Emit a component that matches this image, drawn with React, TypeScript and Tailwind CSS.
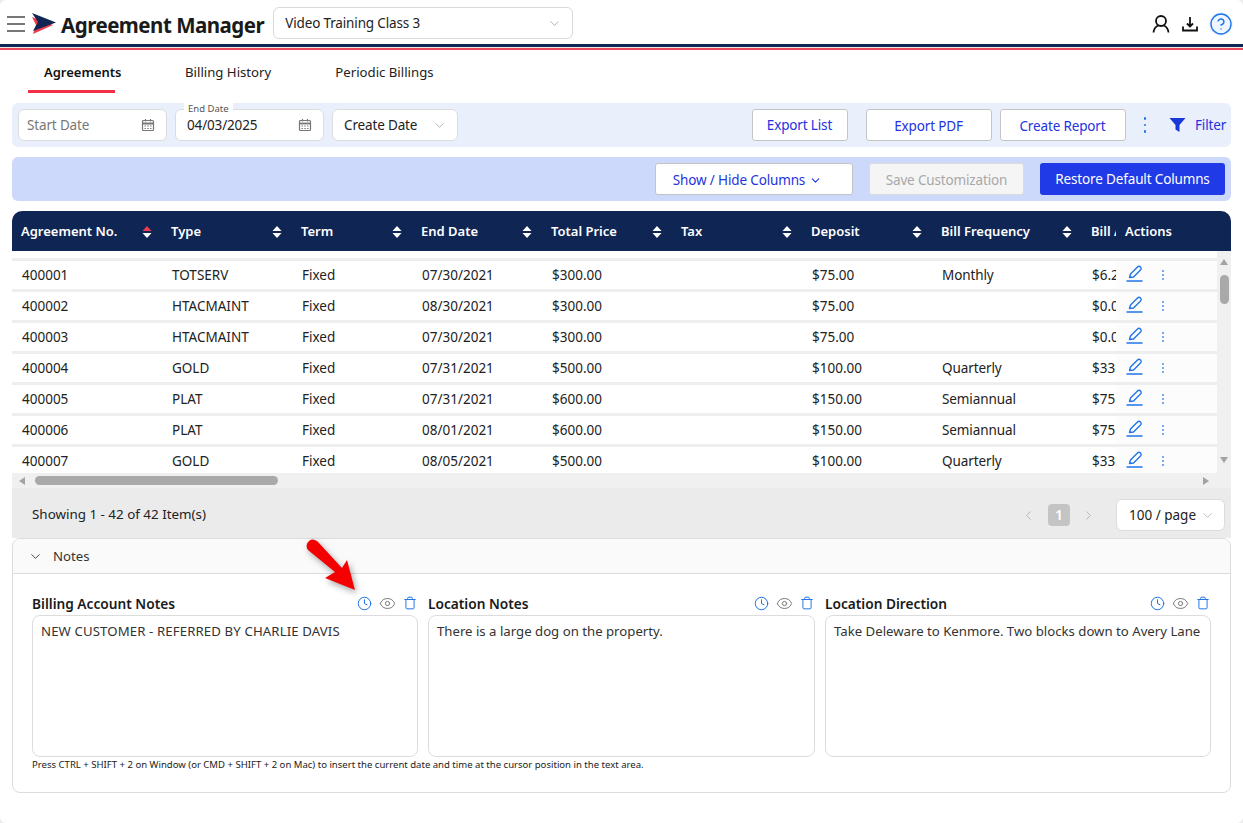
import { ChevronDown, ChevronLeft, ChevronRight, CircleHelp, Clock, Eye, Trash } from 'lucide-react'

type Row = {
  no: string
  type: string
  end: string
  total: string
  deposit: string
  freq: string
  bill: string
}

const rows: Row[] = [
  { no: '400001', type: 'TOTSERV', end: '07/30/2021', total: '$300.00', deposit: '$75.00', freq: 'Monthly', bill: '$6.25' },
  { no: '400002', type: 'HTACMAINT', end: '08/30/2021', total: '$300.00', deposit: '$75.00', freq: '', bill: '$0.00' },
  { no: '400003', type: 'HTACMAINT', end: '07/30/2021', total: '$300.00', deposit: '$75.00', freq: '', bill: '$0.00' },
  { no: '400004', type: 'GOLD', end: '07/31/2021', total: '$500.00', deposit: '$100.00', freq: 'Quarterly', bill: '$33.33' },
  { no: '400005', type: 'PLAT', end: '07/31/2021', total: '$600.00', deposit: '$150.00', freq: 'Semiannual', bill: '$75.00' },
  { no: '400006', type: 'PLAT', end: '08/01/2021', total: '$600.00', deposit: '$150.00', freq: 'Semiannual', bill: '$75.00' },
  { no: '400007', type: 'GOLD', end: '08/05/2021', total: '$500.00', deposit: '$100.00', freq: 'Quarterly', bill: '$33.33' },
]

const columns = [
  { label: 'Agreement No.', width: 'w-[150px]', active: true },
  { label: 'Type', width: 'w-[130px]' },
  { label: 'Term', width: 'w-[120px]' },
  { label: 'End Date', width: 'w-[130px]' },
  { label: 'Total Price', width: 'w-[130px]' },
  { label: 'Tax', width: 'w-[130px]' },
  { label: 'Deposit', width: 'w-[130px]' },
  { label: 'Bill Frequency', width: 'w-[150px]' },
]

const notes = [
  { title: 'Billing Account Notes', text: 'NEW CUSTOMER - REFERRED BY CHARLIE DAVIS', spacing: 'tracking-[0.12px]' },
  { title: 'Location Notes', text: 'There is a large dog on the property.', spacing: '' },
  { title: 'Location Direction', text: 'Take Deleware to Kenmore. Two blocks down to Avery Lane', spacing: '' },
]

function CalendarIcon() {
  return (
    <svg width="14" height="14" viewBox="0 0 14 14" fill="none" stroke="#777" strokeWidth="1.2" className="shrink-0">
      <rect x="1.5" y="2.5" width="11" height="10" rx="1" />
      <path d="M1.5 5.5h11" strokeWidth="1.8" />
      <path d="M4.5 1v2.5M9.5 1v2.5" />
      <path d="M3.5 8h7M3.5 10.5h7" strokeDasharray="1.5 1.3" />
    </svg>
  )
}

function Logo() {
  return (
    <svg width="26" height="24" viewBox="0 0 26 24" className="shrink-0">
      <path d="M1 5 L5 13 L2 22 L22 13 Z" fill="#f0394d" />
      <path d="M1 1 L25 10.5 L2 19 L7 10 Z" fill="#0f2655" />
    </svg>
  )
}

function SortIcon({ active }: { active?: boolean }) {
  return (
    <svg width="10" height="14" viewBox="0 0 10 14" className="shrink-0">
      <path d="M5 1 L9.5 6 H0.5 Z" fill={active ? '#f0394d' : '#fff'} />
      <path d="M5 13 L9.5 8 H0.5 Z" fill="#fff" />
    </svg>
  )
}

function EditIcon() {
  return (
    <svg width="17" height="17" viewBox="0 0 17 17" fill="none" stroke="#1f74e8" strokeWidth="1.4" className="shrink-0">
      <path d="M3.5 12.5 L4.5 9 L11.5 2 A1.5 1.5 0 0 1 14.5 5 L7.5 12 Z" strokeLinejoin="round" />
      <path d="M0.5 16 H16.5" strokeWidth="1.5" />
    </svg>
  )
}

function Kebab({ size }: { size: 'sm' | 'lg' }) {
  const dot = size === 'sm' ? 'h-[2px] w-[2px] bg-[#4a90e8]' : 'h-[2.5px] w-[2.5px] bg-[#1f74e8]'
  const gap = size === 'sm' ? 'gap-[2px]' : 'gap-[4px]'
  return (
    <div className={`flex flex-col items-center ${gap}`}>
      <span className={`${dot} rounded-full`} />
      <span className={`${dot} rounded-full`} />
      <span className={`${dot} rounded-full`} />
    </div>
  )
}

function OutlineButton({ label, width, low }: { label: string; width: string; low?: boolean }) {
  return (
    <button className={`h-8 ${width} ${low ? 'pt-[2px]' : ''} rounded-[3px] border border-[#c4c4c4] bg-white text-[13.5px] tracking-[-0.15px] text-[#2433e0]`}>
      {label}
    </button>
  )
}

function DateField({ value, label }: { value: string; label?: string }) {
  return (
    <div className="relative flex h-8 w-[149px] items-center justify-between rounded-md border border-[#dcdcdc] bg-white pl-2 pr-[11px]">
      {label && (
        <span className="absolute -top-[7px] left-[8px] bg-white px-1 text-[9.5px] leading-[12px] text-[#555]">{label}</span>
      )}
      <span className={`text-[13.5px] tracking-[-0.15px] ${label ? 'pl-[3px] text-[#222]' : 'text-[#777]'}`}>{value}</span>
      <CalendarIcon />
    </div>
  )
}

function RedArrow() {
  return (
    <svg
      width="62"
      height="62"
      viewBox="0 0 62 62"
      className="absolute left-[305px] top-[538px] drop-shadow-[2px_3px_3px_rgba(0,0,0,0.35)]"
    >
      <path d="M3 12 A6 6 0 0 1 13 4 L37 30 L42 22 L50 52 L20 40 L30 34 Z" fill="#f40000" />
    </svg>
  )
}

export default function App() {
  return (
    <div className="h-[823px] w-[1243px] overflow-hidden bg-[#ececec]">
      <div className="relative h-full overflow-hidden rounded-[6px] bg-white font-['Noto_Sans','Open_Sans',sans-serif] text-[#222]">
        {/* top bar */}
        <header className="flex h-11 items-center pl-[7px] pr-[10px]">
          <div className="mt-[3px] flex w-[18px] flex-col gap-[5px]">
            <span className="h-[2px] bg-[#777]" />
            <span className="h-[2px] bg-[#777]" />
            <span className="h-[2px] bg-[#777]" />
          </div>
          <div className="ml-[6px] mt-[3px]">
            <Logo />
          </div>
          <h1 className="ml-[4px] mt-[7px] text-[20.5px] font-bold leading-none tracking-[-0.5px] text-[#1a1a1a]">Agreement Manager</h1>
          <div className="ml-[9px] mt-[2px] flex h-8 w-[300px] items-center justify-between rounded-md border border-[#d9d9d9] pl-[11px] pr-[10px]">
            <span className="text-[13.5px] tracking-[-0.15px]">Video Training Class 3</span>
            <ChevronDown size={15} strokeWidth={1} className="text-[#888]" />
          </div>
          <div className="ml-auto mt-[3px] flex items-center gap-[9px]">
            <svg width="20" height="20" viewBox="0 0 20 20" fill="none" stroke="#111" strokeWidth="1.8">
              <circle cx="10" cy="7" r="5" />
              <path d="M2.5 18.5 C3 14 6 12 7.5 11.5 M17.5 18.5 C17 14 14 12 12.5 11.5" />
            </svg>
            <svg width="20" height="20" viewBox="0 0 20 20" fill="none" stroke="#111" strokeWidth="1.8">
              <path d="M10 3 V12 M7 9.5 L10 12.5 L13 9.5" />
              <path d="M3 12.5 V16.500 H17 V12.5" />
            </svg>
            <CircleHelp size={24} strokeWidth={1.4} className="rounded-full bg-[#f0f6ff] text-[#1f74e8]" />
          </div>
        </header>
        <div className="h-[3px] bg-[#0f2655]" />
        <div className="h-px bg-[#e8e8e8]" />
        <div className="h-[2px] bg-[#e9475c]" />

        {/* tabs */}
        <nav className="flex h-[43px] pl-[28px]">
          <div className="flex h-[43px] w-[87px] items-center whitespace-nowrap border-b-[3px] border-[#f52f45] pl-4 pt-[5px] text-[13px] font-semibold text-[#111]">
            Agreements
          </div>
          <div className="ml-[70px] flex items-center pt-[3px] text-[13.2px]">Billing History</div>
          <div className="ml-[64px] flex items-center pt-[3px] text-[13.2px]">Periodic Billings</div>
        </nav>

        <main className="mt-[10px] px-3">
          {/* filters */}
          <section className="flex h-11 items-center rounded-md bg-[#eaeffc] pl-[6px] pr-[6px]">
            <DateField value="Start Date" />
            <div className="ml-2">
              <DateField value="04/03/2025" label="End Date" />
            </div>
            <div className="ml-2 flex h-8 w-[126px] items-center justify-between rounded-md border border-[#dcdcdc] bg-white pl-[11px] pr-[10px]">
              <span className="text-[13.5px] tracking-[-0.15px]">Create Date</span>
              <ChevronDown size={15} strokeWidth={1} className="text-[#888]" />
            </div>
            <div className="ml-auto flex items-center">
              <OutlineButton label="Export List" width="w-[96px]" />
              <div className="ml-[18px]">
                <OutlineButton label="Export PDF" width="w-[126px]" low />
              </div>
              <div className="ml-2">
                <OutlineButton label="Create Report" width="w-[126px]" low />
              </div>
              <div className="ml-[18px]">
                <Kebab size="lg" />
              </div>
              <svg width="17" height="16" viewBox="0 0 17 16" className="ml-[23px] shrink-0">
                <path d="M0.5 1 H16.5 L10.5 8 V15 L6.5 12.5 V8 Z" fill="#1838d8" />
              </svg>
              <span className="ml-[9px] w-[30px] whitespace-nowrap text-[13.5px] tracking-[-0.15px] text-[#2433e0]">Filter</span>
            </div>
          </section>

          {/* column customization */}
          <section className="mt-[10px] flex h-11 items-center justify-end gap-4 rounded-md bg-[#ccd9fb] pr-[6px]">
            <button className="flex h-8 w-[198px] items-center justify-center gap-1 rounded-[3px] border border-[#c4c4c4] bg-white pr-[13px] pt-[2px] text-[13.5px] tracking-[-0.15px] text-[#2433e0]">
              Show / Hide Columns
              <ChevronDown size={13} strokeWidth={2} />
            </button>
            <button className="h-8 w-[155px] rounded-[3px] border border-[#dcdcdc] bg-[#f5f5f5] pt-[2px] text-[13.5px] tracking-[-0.15px] text-[#a8a8a8]">
              Save Customization
            </button>
            <button className="h-8 w-[185px] rounded-[3px] bg-[#1f3ae6] pt-[1px] text-[13.5px] tracking-[-0.15px] text-white">
              Restore Default Columns
            </button>
          </section>

          {/* table */}
          <section className="mt-[10px]">
            <div className="flex h-10 items-center overflow-hidden rounded-t-[10px] bg-[#0f2655] pt-[1px] text-[13px] font-semibold text-white">
              {columns.map((c) => (
                <div key={c.label} className={`flex ${c.width} shrink-0 items-center justify-between pl-[9px] pr-[10px]`}>
                  <span>{c.label}</span>
                  <SortIcon active={c.active} />
                </div>
              ))}
              <div className="w-[34px] shrink-0 overflow-hidden whitespace-nowrap pl-[9px]">Bill Amount</div>
              <div className="pl-[9px]">Actions</div>
            </div>

            <div className="flex h-[222px]">
              <div className="h-full w-[1205px] overflow-hidden bg-white pt-[7px]">
                {rows.map((r) => (
                  <div key={r.no} className="flex h-[31px] border-t-[3px] border-[#eeeeee] text-[13.5px] leading-[28px]">
                    <div className="w-[150px] shrink-0 pl-[10px]">{r.no}</div>
                    <div className="w-[130px] shrink-0 pl-[10px]">{r.type}</div>
                    <div className="w-[120px] shrink-0 pl-[10px]">Fixed</div>
                    <div className="w-[130px] shrink-0 pl-[10px]">{r.end}</div>
                    <div className="w-[130px] shrink-0 pl-[10px]">{r.total}</div>
                    <div className="w-[130px] shrink-0 pl-[10px]" />
                    <div className="w-[130px] shrink-0 pl-[10px]">{r.deposit}</div>
                    <div className="w-[150px] shrink-0 pl-[10px] tracking-[-0.1px]">{r.freq}</div>
                    <div className="w-[34px] shrink-0 overflow-hidden whitespace-nowrap pl-[10px]">{r.bill}</div>
                    <div className="flex flex-1 items-center bg-[#fcfcfc] pl-[10px]">
                      <div className="-mt-[3px]">
                        <EditIcon />
                      </div>
                      <div className="ml-[19px]">
                        <Kebab size="sm" />
                      </div>
                    </div>
                  </div>
                ))}
              </div>
              {/* vertical scrollbar */}
              <div className="flex w-[14px] flex-col items-center bg-[#f0f0f0] pt-[8px]">
                <span className="h-0 w-0 border-x-[4.5px] border-b-[6px] border-x-transparent border-b-[#a3a3a3]" />
                <span className="mt-[10px] h-[29px] w-[9px] rounded-full bg-[#a9a9a9]" />
                <span className="mt-[153px] h-0 w-0 border-x-[4.5px] border-t-[6px] border-x-transparent border-t-[#a3a3a3]" />
              </div>
            </div>

            {/* horizontal scrollbar */}
            <div className="flex h-[15px] items-center bg-[#f0f0f0] pl-[7px] pr-[22px]">
              <span className="h-0 w-0 border-y-[4.5px] border-r-[6px] border-y-transparent border-r-[#a3a3a3]" />
              <span className="ml-[10px] h-[9px] w-[243px] rounded-full bg-[#a9a9a9]" />
              <span className="ml-auto h-0 w-0 border-y-[4.5px] border-l-[6px] border-y-transparent border-l-[#a3a3a3]" />
            </div>

            {/* pagination */}
            <div className="flex h-[50px] items-center bg-[#ebebeb] pl-5 pr-[6px] pt-[2px]">
              <span className="text-[13.4px]">Showing 1 - 42 of 42 Item(s)</span>
              <div className="ml-auto mt-[2px] flex items-center">
                <ChevronLeft size={15} strokeWidth={1.2} className="text-[#a8a8a8]" />
                <span className="ml-[12px] flex h-[22px] w-[22px] items-center justify-center rounded-[4px] bg-[#c4c4c4] text-sm font-semibold text-white">
                  1
                </span>
                <ChevronRight size={15} strokeWidth={1.2} className="ml-[11px] text-[#a8a8a8]" />
                <div className="ml-[20px] flex h-8 w-[109px] items-center justify-between rounded-md border border-[#dcdcdc] bg-white pl-3 pr-[9px] text-[13.5px]">
                  100 / page
                  <ChevronDown size={15} strokeWidth={1} className="text-[#999]" />
                </div>
              </div>
            </div>
          </section>

          {/* notes */}
          <section className="h-[255px] overflow-hidden rounded-lg border border-[#dcdcdc]">
            <div className="flex h-[35px] items-center gap-[10px] border-b border-[#dcdcdc] bg-[#fafafa] pl-[15px] pt-[1px] text-[13.2px] text-[#333]">
              <ChevronDown size={15} strokeWidth={1.4} />
              Notes
            </div>
            <div className="grid grid-cols-[386px_387px_386px] gap-x-[10px] pl-[19px] pt-[20px]">
              {notes.map((n) => (
                <div key={n.title}>
                  <div className="flex h-[21px] items-center justify-between pb-[1px]">
                    <span className="text-[13.7px] font-semibold text-[#1a1a1a]">{n.title}</span>
                    <div className="flex items-center gap-[7px] pr-[1px] pb-[2px]">
                      <Clock size={15} strokeWidth={1.6} className="text-[#1f74e8]" />
                      <Eye size={17} strokeWidth={1.4} className="text-[#777]" />
                      <Trash size={14} strokeWidth={1.7} className="text-[#1f74e8]" />
                    </div>
                  </div>
                  <div className={`h-[142px] rounded-lg border border-[#dcdcdc] px-[8px] py-[6px] text-[13.2px] text-[#333] ${n.spacing}`}>
                    {n.text}
                  </div>
                </div>
              ))}
            </div>
            <p className="pl-[19px] pt-[1px] text-[9.56px] leading-[14px] text-[#222]">
              Press CTRL + SHIFT + 2 on Window (or CMD + SHIFT + 2 on Mac) to insert the current date and time at the cursor position in the text area.
            </p>
          </section>
        </main>

        <RedArrow />
      </div>
    </div>
  )
}
